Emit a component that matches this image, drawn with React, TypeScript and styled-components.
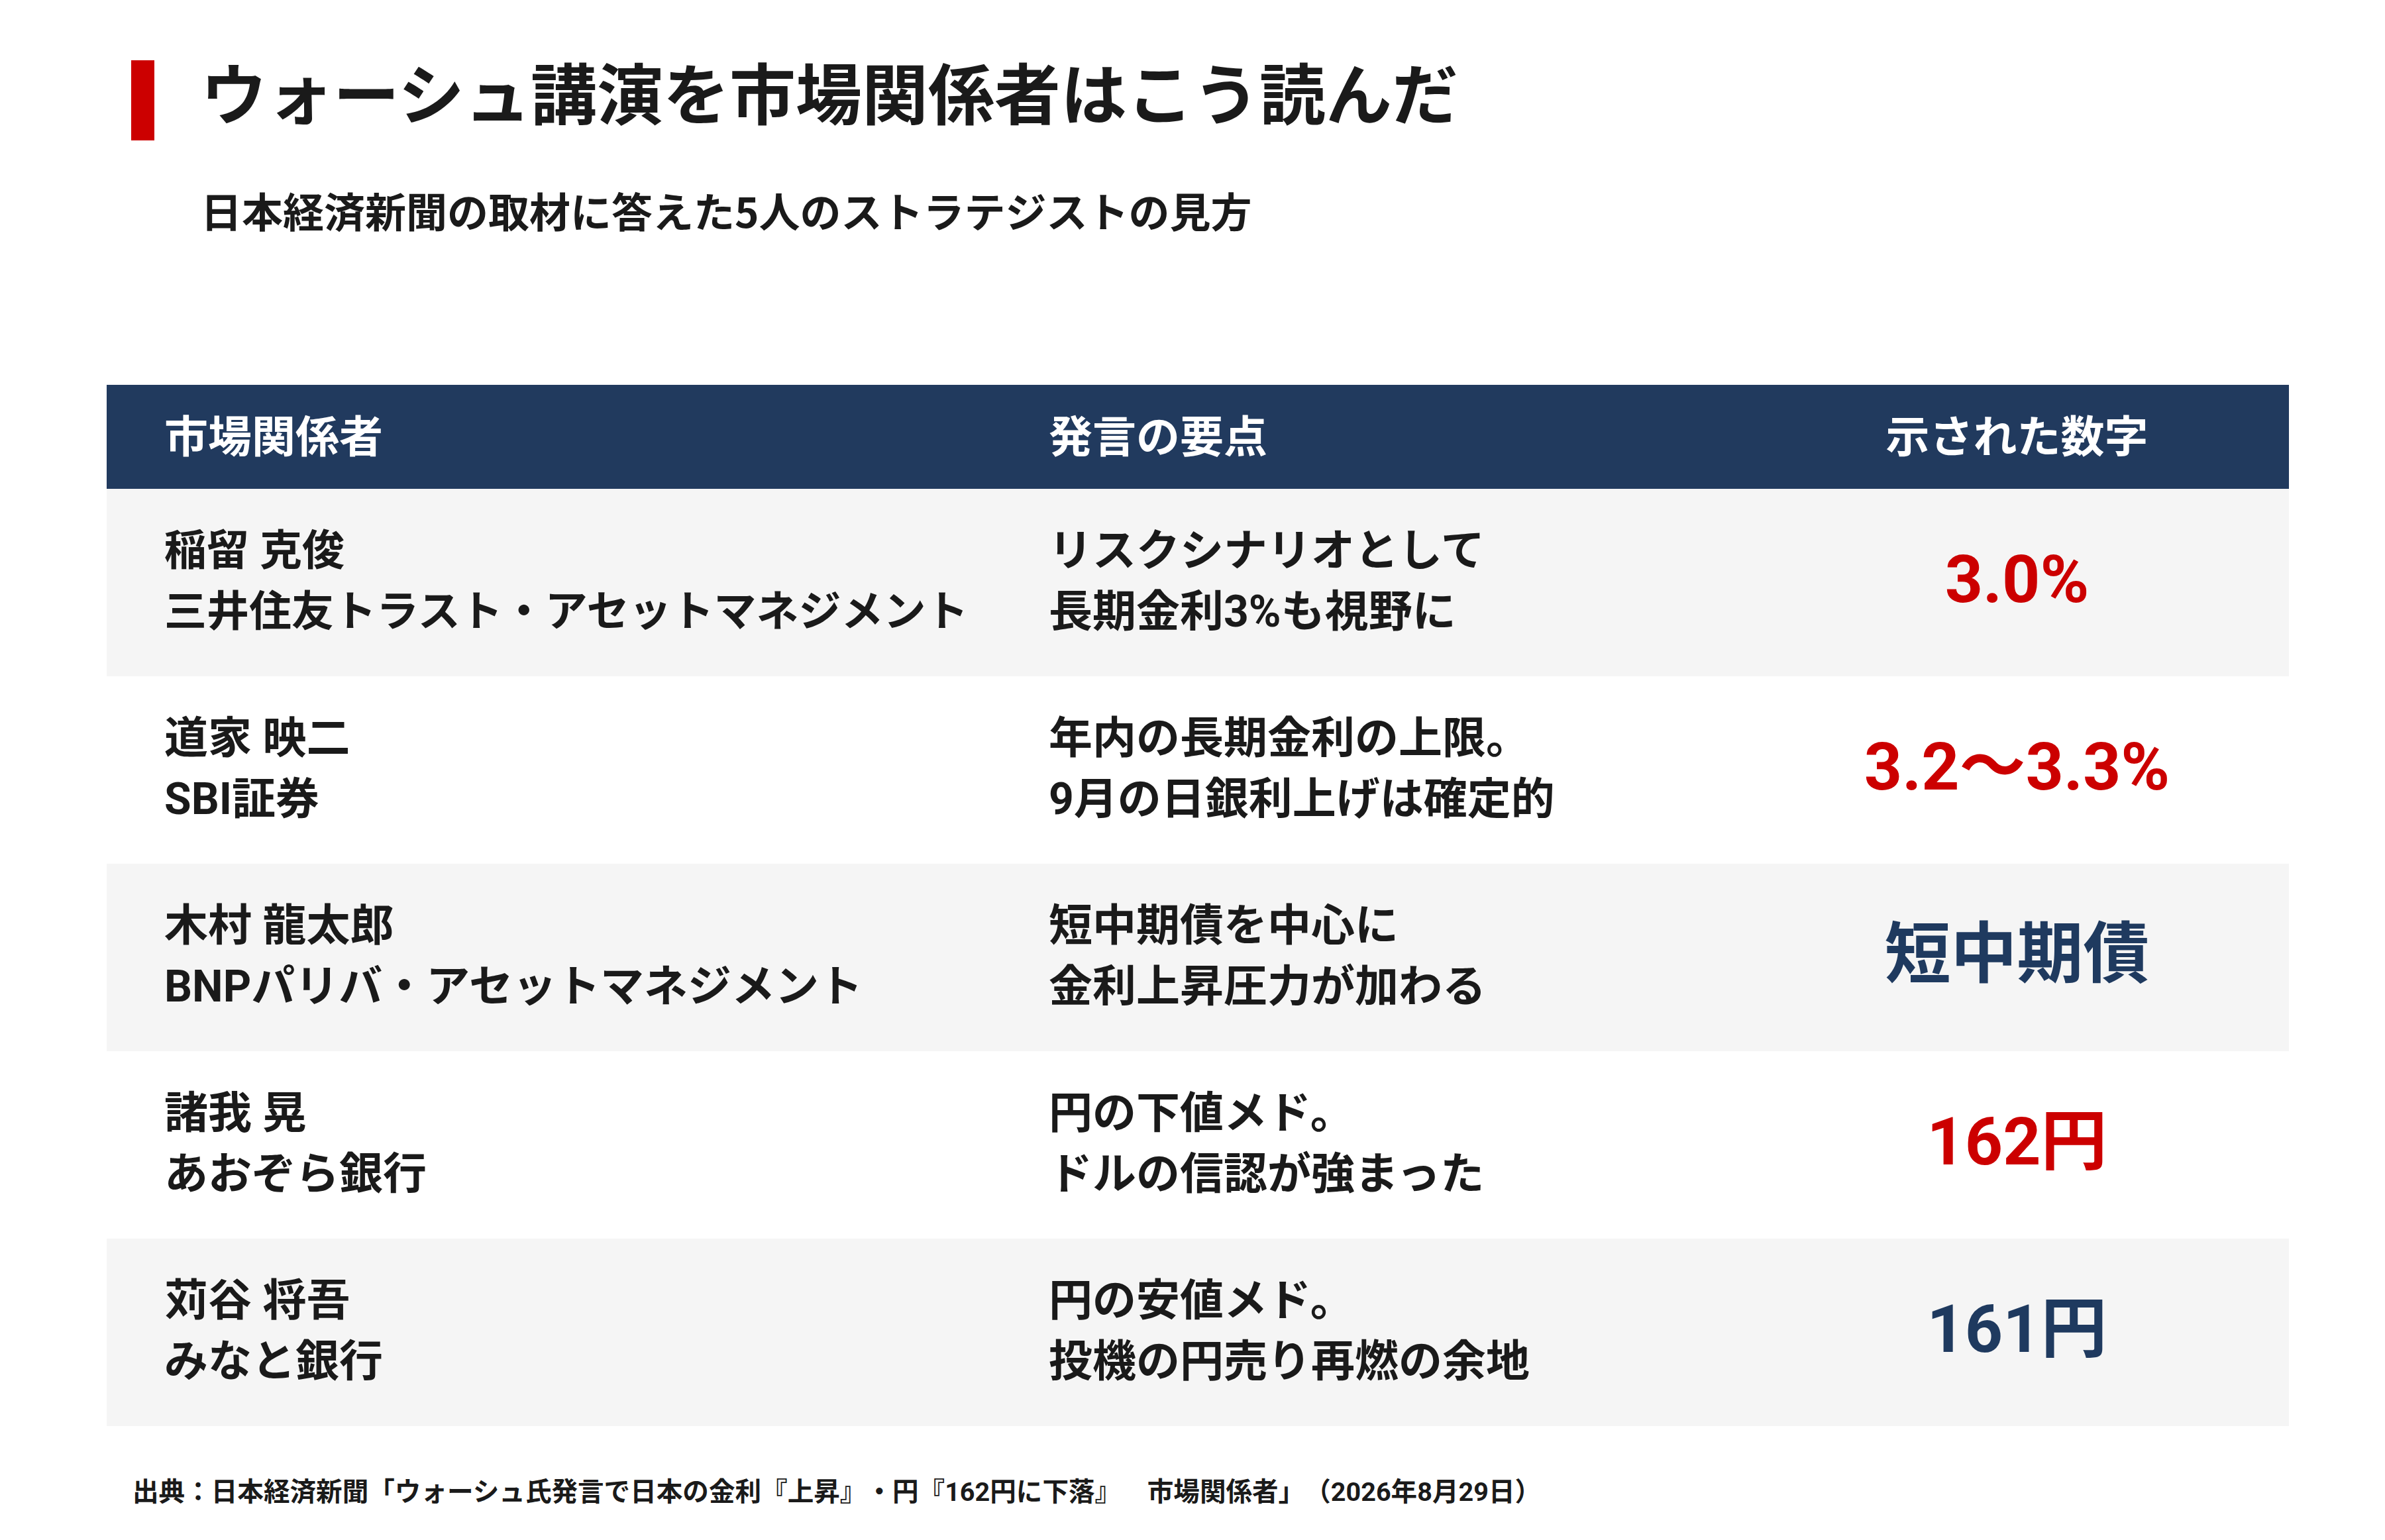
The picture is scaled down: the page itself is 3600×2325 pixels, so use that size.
import React from "react";
import styled, { createGlobalStyle } from "styled-components";

const GlobalStyle = createGlobalStyle`
  html, body {
    margin: 0;
    padding: 0;
    background: #ffffff;
  }
  body {
    font-family: Roboto, "Noto Sans CJK JP", sans-serif;
    color: #1a1a1a;
    text-spacing-trim: space-all;
  }
`;

const cjk = `"Noto Sans CJK JP", "Noto Sans", sans-serif`;

const Page = styled.div`
  width: 3600px;
  height: 2325px;
  background: #ffffff;
  box-sizing: border-box;
  padding-top: 77px;
`;

const TitleRow = styled.div`
  display: flex;
  align-items: flex-start;
  padding-left: 198px;
  gap: 70px;
`;

const Bar = styled.div`
  width: 35px;
  height: 121px;
  margin-top: 14px;
  background: #cc0000;
  flex: none;
`;

const Title = styled.h1`
  margin: 0;
  font-family: ${cjk};
  font-size: 100px;
  line-height: 120px;
  font-weight: 700;
  color: #1a1a1a;
`;

const Subtitle = styled.p`
  margin: 62px 0 0 303px;
  font-family: ${cjk};
  font-size: 62px;
  line-height: 87px;
  font-weight: 700;
  color: #1a1a1a;
`;

const Table = styled.div`
  margin: 220px 0 0 161px;
  width: 3294px;
  display: grid;
  grid-template-columns: 1335px 1138px 1fr;
`;

const HeadCell = styled.div<{ $center?: boolean }>`
  background: #213a5e;
  color: #ffffff;
  height: 157px;
  box-sizing: border-box;
  display: flex;
  align-items: center;
  justify-content: ${(p) => (p.$center ? "center" : "flex-start")};
  padding: 0 0 12px ${(p) => (p.$center ? "0" : "87px")};
  font-family: ${cjk};
  font-size: 66px;
  font-weight: 700;
`;

const Cell = styled.div<{ $alt: boolean; $center?: boolean }>`
  background: ${(p) => (p.$alt ? "#f5f5f5" : "#ffffff")};
  height: 283px;
  box-sizing: border-box;
  display: flex;
  flex-direction: column;
  justify-content: center;
  align-items: ${(p) => (p.$center ? "center" : "flex-start")};
  padding: 0 0 ${(p) => (p.$center ? "10px" : "4px")}
    ${(p) => (p.$center ? "0" : "87px")};
`;

const Line = styled.div<{ $small?: boolean }>`
  font-size: ${(p) => (p.$small ? "64px" : "66px")};
  line-height: 92px;
  font-weight: 700;
  color: #1a1a1a;
  white-space: nowrap;
`;

const Value = styled.div<{ $tone: "red" | "navy" }>`
  font-size: 100px;
  line-height: 120px;
  font-weight: 700;
  color: ${(p) => (p.$tone === "red" ? "#cc0000" : "#1f3a5f")};
  white-space: nowrap;
`;

const Source = styled.p`
  margin: 72px 0 0 200px;
  font-size: 39.6px;
  line-height: 56px;
  font-weight: 700;
  color: #1a1a1a;
  white-space: pre;
`;

type Row = {
  who: [string, string];
  point: [string, string];
  value: string;
  tone: "red" | "navy";
  compact?: boolean;
};

const rows: Row[] = [
  {
    who: ["稲留 克俊", "三井住友トラスト・アセットマネジメント"],
    point: ["リスクシナリオとして", "長期金利3%も視野に"],
    value: "3.0%",
    tone: "red",
    compact: true,
  },
  {
    who: ["道家 映二", "SBI証券"],
    point: ["年内の長期金利の上限。", "9月の日銀利上げは確定的"],
    value: "3.2〜3.3%",
    tone: "red",
  },
  {
    who: ["木村 龍太郎", "BNPパリバ・アセットマネジメント"],
    point: ["短中期債を中心に", "金利上昇圧力が加わる"],
    value: "短中期債",
    tone: "navy",
  },
  {
    who: ["諸我 晃", "あおぞら銀行"],
    point: ["円の下値メド。", "ドルの信認が強まった"],
    value: "162円",
    tone: "red",
  },
  {
    who: ["苅谷 将吾", "みなと銀行"],
    point: ["円の安値メド。", "投機の円売り再燃の余地"],
    value: "161円",
    tone: "navy",
  },
];

export default function App() {
  return (
    <>
      <GlobalStyle />
      <Page>
        <TitleRow>
          <Bar />
          <Title>ウォーシュ講演を市場関係者はこう読んだ</Title>
        </TitleRow>
        <Subtitle>日本経済新聞の取材に答えた5人のストラテジストの見方</Subtitle>
        <Table>
          <HeadCell>市場関係者</HeadCell>
          <HeadCell>発言の要点</HeadCell>
          <HeadCell $center>示された数字</HeadCell>
          {rows.map((r, i) => {
            const alt = i % 2 === 0;
            return (
              <React.Fragment key={i}>
                <Cell $alt={alt}>
                  <Line $small={r.compact}>{r.who[0]}</Line>
                  <Line $small={r.compact}>{r.who[1]}</Line>
                </Cell>
                <Cell $alt={alt}>
                  <Line>{r.point[0]}</Line>
                  <Line>{r.point[1]}</Line>
                </Cell>
                <Cell $alt={alt} $center>
                  <Value $tone={r.tone}>{r.value}</Value>
                </Cell>
              </React.Fragment>
            );
          })}
        </Table>
        <Source>
          出典：日本経済新聞「ウォーシュ氏発言で日本の金利『上昇』・円『162円に下落』　市場関係者」（2026年8月29日）
        </Source>
      </Page>
    </>
  );
}
